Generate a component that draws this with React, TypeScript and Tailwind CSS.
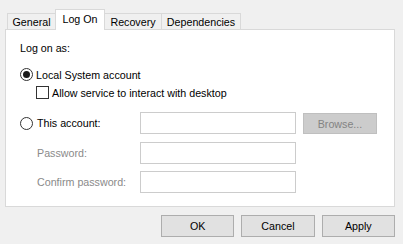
import React from "react";

function Radio({ checked }: { checked?: boolean }) {
  return (
    <div className="w-[13px] h-[13px] rounded-full border border-[#333333] bg-white flex items-center justify-center shrink-0">
      {checked && <div className="w-[7px] h-[7px] rounded-full bg-[#1a1a1a]" />}
    </div>
  );
}

function TextBox() {
  return <div className="w-[156px] h-[22px] border border-[#cccccc] bg-white shrink-0" />;
}

function Btn({ label }: { label: string }) {
  return (
    <div className="w-[74px] h-[22px] border border-[#adadad] bg-[#e1e1e1] flex items-center justify-center">
      {label}
    </div>
  );
}

export default function App() {
  return (
    <div className="w-[403px] h-[244px] bg-[#f0f0f0] font-['Liberation_Sans',Arial,sans-serif] text-[10.7px] leading-[14px] text-black pt-[9px] pl-[5px] pr-[8px] overflow-hidden">
      <div className="flex items-end h-[20px] pl-[2px] relative z-10">
        <div className="w-[49px] h-[16px] border border-b-0 border-[#d9d9d9] bg-[#f0f0f0] flex items-center justify-center">
          General
        </div>
        <div className="w-[50px] h-[21px] -ml-px mb-[-1px] border border-b-0 border-[#d9d9d9] bg-white flex items-center justify-center relative z-10 pb-[3px]">
          Log On
        </div>
        <div className="w-[58px] h-[16px] -ml-px border border-b-0 border-[#d9d9d9] bg-[#f0f0f0] flex items-center justify-center">
          Recovery
        </div>
        <div className="w-[80px] h-[16px] -ml-px border border-b-0 border-[#d9d9d9] bg-[#f0f0f0] flex items-center justify-center">
          Dependencies
        </div>
      </div>
      <div className="w-[390px] h-[178px] border border-[#d9d9d9] bg-white pl-[14px] pt-[11px] flex flex-col">
        <div className="h-[14px]">Log on as:</div>
        <div className="mt-[13px] h-[13px] flex items-center gap-[3px]">
          <Radio checked />
          <span>Local System account</span>
        </div>
        <div className="mt-[5px] h-[13px] flex items-center gap-[3px] pl-[16px]">
          <div className="w-[13px] h-[13px] border border-[#333333] bg-white shrink-0" />
          <span>Allow service to interact with desktop</span>
        </div>
        <div className="mt-[13px] h-[22px] flex items-center">
          <div className="w-[120px] flex items-center gap-[4px]">
            <Radio />
            <span>This account:</span>
          </div>
          <TextBox />
          <div className="ml-[7px] w-[74px] h-[21px] mt-[1px] border border-[#bfbfbf] bg-[#cccccc] text-[#838383] flex items-center justify-center">
            Browse...
          </div>
        </div>
        <div className="mt-[8px] h-[22px] flex items-center">
          <div className="w-[120px] pl-[17px] text-[#8a8a8a]">Password:</div>
          <TextBox />
        </div>
        <div className="mt-[7px] h-[22px] flex items-center">
          <div className="w-[120px] pl-[17px] text-[#8a8a8a]">Confirm password:</div>
          <TextBox />
        </div>
      </div>
      <div className="mt-[8px] ml-[156px] flex gap-[7px]">
        <Btn label="OK" />
        <Btn label="Cancel" />
        <Btn label="Apply" />
      </div>
    </div>
  );
}
